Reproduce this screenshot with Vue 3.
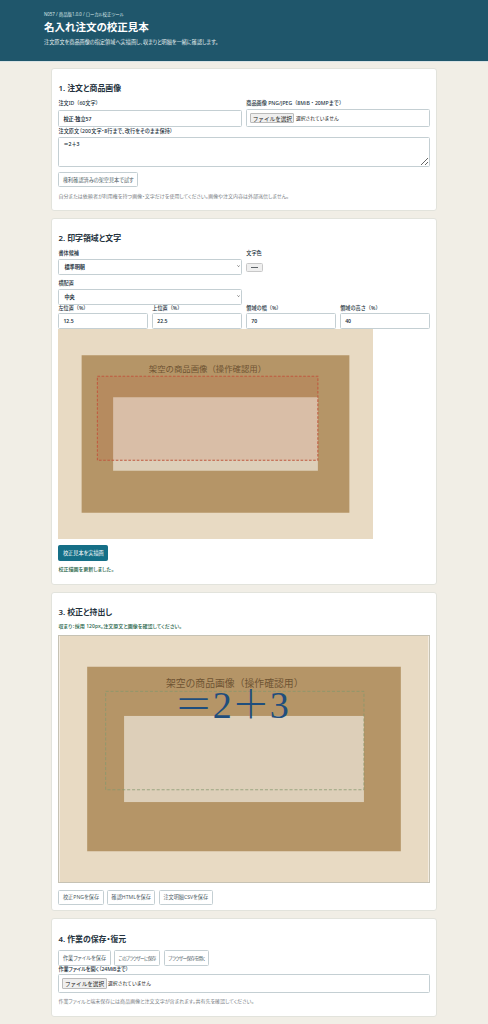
<script setup>
import { ref } from 'vue'

const orderId = ref('校正-独立57')
const orderText = ref('＝2＋3')
const font = ref('標準明朝')
const align = ref('中央')
const area = [
  { label: '左位置（%）', value: '12.5' },
  { label: '上位置（%）', value: '22.5' },
  { label: '領域の幅（%）', value: '70' },
  { label: '領域の高さ（%）', value: '40' }
]
const exports1 = ['校正PNGを保存', '確認HTMLを保存', '注文明細CSVを保存']
</script>

<template>
  <div class="page">
    <header class="top">
      <p class="eyebrow">N057 / 商品版1.0.0 / ローカル校正ツール</p>
      <h1>名入れ注文の校正見本</h1>
      <p class="lead">注文原文を商品画像の指定領域へ実描画し、収まりと明細を一緒に確認します。</p>
    </header>

    <main class="main">
      <section class="card">
        <h2>1. 注文と商品画像</h2>
        <div class="two">
          <label class="field">
            <span>注文ID（60文字）</span>
            <input v-model="orderId" class="box id-input" type="text" />
          </label>
          <div class="field">
            <span>商品画像 PNG/JPEG（8MiB・20MPまで）</span>
            <div class="box file">
              <span class="file-btn">ファイルを選択</span>
              <span class="file-name">選択されていません</span>
            </div>
          </div>
        </div>
        <label class="field">
          <span class="kana-long">注文原文（200文字・8行まで、改行をそのまま保持）</span>
          <textarea v-model="orderText" class="box area"></textarea>
        </label>
        <div class="btn-row first"><button class="btn">権利確認済みの架空見本で試す</button></div>
        <p class="hint card-one-hint">自分または依頼者が利用権を持つ画像・文字だけを使用してください。画像や注文内容は外部送信しません。</p>
      </section>

      <section class="card">
        <h2>2. 印字領域と文字</h2>
        <div class="four">
          <label class="field wide">
            <span>書体候補</span>
            <div class="sel-wrap">
              <select v-model="font" class="box sel"><option>標準明朝</option></select>
              <svg class="chevron" viewBox="0 0 8 5"><path d="M1 1l3 3 3-3" fill="none" stroke="#222" stroke-width="1.4" /></svg>
            </div>
          </label>
          <div class="field wide">
            <span>文字色</span>
            <div class="swatch"><i></i></div>
          </div>
          <label class="field wide">
            <span>横配置</span>
            <div class="sel-wrap">
              <select v-model="align" class="box sel"><option>中央</option></select>
              <svg class="chevron" viewBox="0 0 8 5"><path d="M1 1l3 3 3-3" fill="none" stroke="#222" stroke-width="1.4" /></svg>
            </div>
          </label>
          <div class="wide"></div>
          <label v-for="a in area" :key="a.label" class="field tight">
            <span>{{ a.label }}</span>
            <input class="box" type="text" :value="a.value" />
          </label>
        </div>

        <svg class="proof small" viewBox="0 0 1200 800">
          <rect width="1200" height="800" fill="#e8dac3" />
          <rect x="90" y="100" width="1020" height="600" fill="#b59567" />
          <rect x="210" y="260" width="780" height="280" fill="#ddcfb9" />
          <text x="346" y="165" class="photo-text">架空の商品画像（操作確認用）</text>
          <rect x="150" y="180" width="840" height="320" fill="rgba(190,70,40,0.12)" stroke="#c0593f" stroke-width="4" stroke-dasharray="10 6" />
        </svg>

        <div class="btn-row redraw"><button class="btn primary">校正見本を実描画</button></div>
        <p class="status first-status">校正描画を更新しました。</p>
      </section>

      <section class="card">
        <h2 class="tight-head">3. 校正と持出し</h2>
        <p class="status fit">収まり：採用 120px。注文原文と画像を確認してください。</p>
        <svg class="proof large" viewBox="0 0 1200 800">
          <rect width="1200" height="800" fill="#e8dac3" />
          <rect x="90" y="100" width="1020" height="600" fill="#b59567" />
          <rect x="210" y="260" width="780" height="280" fill="#ddcfb9" />
          <text x="346" y="165" class="photo-text">架空の商品画像（操作確認用）</text>
          <rect x="150" y="180" width="840" height="320" fill="none" stroke="#84986c" stroke-opacity="0.8" stroke-width="3" stroke-dasharray="10 6" />
          <text x="560" y="268" text-anchor="middle" class="print-text">＝2＋3</text>
        </svg>
        <div class="btn-row export-row"><button v-for="b in exports1" :key="b" class="btn">{{ b }}</button></div>
      </section>

      <section class="card">
        <h2>4. 作業の保存・復元</h2>
        <div class="btn-row restore">
          <button class="btn">作業ファイルを保存</button>
          <button class="btn narrow">このブラウザーに保存</button>
          <button class="btn narrow">ブラウザー保存を開く</button>
        </div>
        <div class="field">
          <span class="kana-short">作業ファイルを開く（24MiBまで）</span>
          <div class="box file wide-file">
            <span class="file-btn">ファイルを選択</span>
            <span class="file-name">選択されていません</span>
          </div>
        </div>
        <p class="hint">作業ファイルと端末保存には商品画像と注文文字が含まれます。共有先を確認してください。</p>
      </section>
    </main>
  </div>
</template>

<style>
body {
  margin: 0;
  background: #f1eee6;
}
</style>

<style scoped>
.page {
  font-family: "Noto Sans", "Noto Sans CJK JP", sans-serif;
  font-feature-settings: "palt";
  color: #24323d;
  font-size: 5.15px;
  line-height: 1.4;
}

.top {
  box-sizing: border-box;
  height: 62px;
  padding: 10.5px 44px 0;
  background: #1f566b;
  border-bottom: 1px solid #d9e2e4;
  color: #fff;
}

.eyebrow {
  margin: 0;
  font-size: 4.4px;
  line-height: 6px;
  color: #dce8ea;
}

.top h1 {
  margin: 3px 0 0;
  font-size: 10.5px;
  line-height: 14px;
  font-weight: 700;
}

.lead {
  margin: 5px 0 0;
  line-height: 7px;
  color: #e6eff0;
}

.main {
  width: 386px;
  margin: 6px auto 0;
  display: flex;
  flex-direction: column;
  gap: 6.8px;
  padding-bottom: 7px;
}

.card {
  box-sizing: border-box;
  padding: 13.4px 6.4px 6.4px;
  background: #fff;
  border: 0.6px solid #e2e3dc;
  border-radius: 3px;
  display: flex;
  flex-direction: column;
}

.card h2 {
  margin: 0 0 5.5px;
  font-size: 7.9px;
  line-height: 12px;
  font-weight: 600;
}

.card h2.tight-head {
  margin-bottom: 4.6px;
}

.field {
  display: flex;
  flex-direction: column;
  font-weight: 500;
  min-width: 0;
}

.field > span {
  line-height: 7px;
  margin-bottom: 2px;
  font-feature-settings: normal;
}

.field > span.kana-long {
  font-feature-settings: "palt";
  letter-spacing: 0.1px;
}

.field > span.kana-short {
  font-feature-settings: "palt";
  letter-spacing: -0.1px;
  margin-bottom: 1px;
}

.two {
  display: grid;
  grid-template-columns: 1fr 1fr;
  gap: 4.5px;
  margin-bottom: 0.5px;
}

.four {
  display: grid;
  grid-template-columns: repeat(4, 1fr);
  column-gap: 4.5px;
  row-gap: 5px;
}

.wide {
  grid-column: span 2;
}

.field.tight {
  margin-top: -4.5px;
}

.field.tight > span {
  margin-bottom: 1px;
}

.box {
  box-sizing: border-box;
  width: 100%;
  height: 16px;
  padding: 0 4px;
  border: 0.6px solid #c4cfd3;
  border-radius: 1.5px;
  background: #fff;
  color: #24323d;
  font-family: inherit;
  font-size: inherit;
  font-feature-settings: inherit;
  font-weight: 600;
  outline: none;
}

.id-input {
  height: 17px;
  margin-top: 1.5px;
}

.file {
  height: 18.5px;
  display: flex;
  align-items: center;
  gap: 1.5px;
  padding: 0 3px;
}

.file-btn {
  padding: 0 1.5px;
  height: 10.5px;
  line-height: 10px;
  font-size: 5.6px;
  font-weight: 400;
  font-feature-settings: normal;
  color: #222;
  background: #efefef;
  border: 0.4px solid #bbb;
  border-radius: 1px;
  box-sizing: border-box;
}

.file-name {
  font-size: 4.8px;
  font-weight: 400;
  font-feature-settings: normal;
  color: #111;
}

.area {
  display: block;
  height: 30.5px;
  padding: 2.5px 4px;
  resize: vertical;
}

.sel-wrap {
  position: relative;
}

.sel {
  display: block;
  padding: 0 5px;
  appearance: none;
}

.chevron {
  position: absolute;
  right: 1.8px;
  top: 6.6px;
  width: 3.2px;
  height: 2px;
  pointer-events: none;
}

.swatch {
  box-sizing: border-box;
  width: 17px;
  height: 9px;
  margin-top: 3.8px;
  padding: 2px;
  background: #efefef;
  border: 0.5px solid #c8c8c8;
  border-radius: 1.5px;
  display: flex;
  align-items: center;
  justify-content: center;
}

.swatch i {
  display: block;
  width: 60%;
  height: 0.7px;
  background: #5e6468;
}

.proof {
  display: block;
  flex: none;
}

.small {
  width: 315px;
  height: 210px;
}

.large {
  box-sizing: border-box;
  width: 372px;
  height: 248px;
  border: 0.5px solid #c6c2b4;
}

.photo-text {
  font-family: "Noto Sans CJK JP", sans-serif;
  font-feature-settings: normal;
  font-size: 32px;
  fill: #6f5433;
}

.print-text {
  font-family: "Liberation Serif", "Noto Sans CJK JP", serif;
  font-feature-settings: normal;
  font-size: 124px;
  font-weight: 300;
  fill: #1f4e7d;
}

.btn-row {
  display: flex;
  gap: 3.3px;
}

.btn-row.first {
  margin-top: 4.5px;
}

.btn-row.redraw {
  margin-top: 6px;
}

.btn-row.restore {
  margin-bottom: 0.2px;
}

.btn-row.export-row {
  margin-top: 6.4px;
  margin-bottom: -1px;
}

.btn {
  height: 15.5px;
  padding: 0 3.6px;
  background: #fff;
  border: 0.6px solid #c4cfd3;
  border-radius: 1.5px;
  color: #4d5d66;
  font-family: inherit;
  font-size: inherit;
  font-feature-settings: inherit;
  white-space: nowrap;
}

.btn.narrow {
  font-size: 4.6px;
  letter-spacing: -0.58px;
}

.btn.primary {
  background: #156f87;
  border-color: #156f87;
  color: #fff;
}

.hint {
  margin: 5.5px 0 4.6px;
  font-size: 5.02px;
  line-height: 7px;
  color: #7a8085;
}

.card-one-hint {
  margin-bottom: 3.8px;
}

.status {
  margin: 0;
  font-size: 5.05px;
  font-weight: 500;
  line-height: 7px;
  color: #1e6347;
}

.first-status {
  margin-top: 5px;
  margin-bottom: 5px;
}

.fit {
  margin-bottom: 5.2px;
}

.wide-file {
  height: 19px;
}
</style>
